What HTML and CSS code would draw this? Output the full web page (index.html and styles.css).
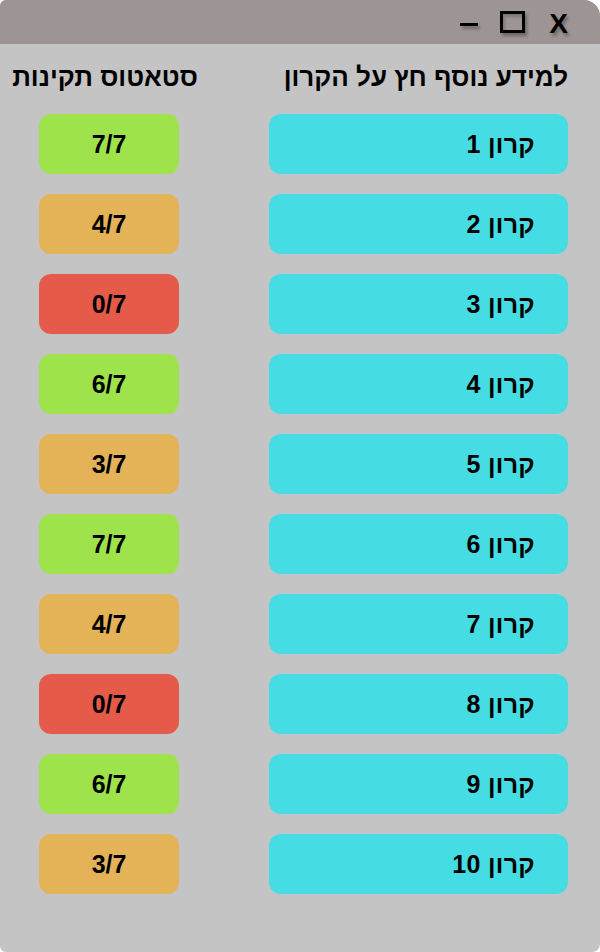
FILE: index.html
```html
<!DOCTYPE html>
<html lang="he">
<head>
<meta charset="utf-8">
<link rel="stylesheet" href="styles.css">
</head>
<body>
<div class="window">
  <div class="titlebar">
    <span class="tb-btn tb-min"></span>
    <span class="tb-btn tb-max"></span>
    <span class="tb-btn tb-close">X</span>
  </div>
  <div class="content" dir="rtl">
    <div class="head head-main">למידע נוסף חץ על הקרון</div>
    <div class="head head-status">סטאטוס תקינות</div>

    <div class="car">קרון 1</div><div class="status green">7/7</div>
    <div class="car">קרון 2</div><div class="status orange">4/7</div>
    <div class="car">קרון 3</div><div class="status red">0/7</div>
    <div class="car">קרון 4</div><div class="status green">6/7</div>
    <div class="car">קרון 5</div><div class="status orange">3/7</div>
    <div class="car">קרון 6</div><div class="status green">7/7</div>
    <div class="car">קרון 7</div><div class="status orange">4/7</div>
    <div class="car">קרון 8</div><div class="status red">0/7</div>
    <div class="car">קרון 9</div><div class="status green">6/7</div>
    <div class="car">קרון 10</div><div class="status orange">3/7</div>
  </div>
</div>
</body>
</html>
```
FILE: styles.css
```css
html, body {
  margin: 0;
  padding: 0;
  background: #ffffff;
}
body {
  font-family: "Liberation Sans", Arial, sans-serif;
}
.window {
  width: 600px;
  height: 952px;
  background: #c4c4c4;
  border-radius: 6px 16px 8px 6px;
  overflow: hidden;
  display: flex;
  flex-direction: column;
}
.titlebar {
  height: 44px;
  background: #9c9594;
  display: flex;
  align-items: center;
  justify-content: flex-end;
  padding-right: 32px;
  box-sizing: border-box;
}
.tb-btn {
  color: #000;
  font-weight: bold;
}
.tb-min {
  width: 18px;
  height: 3px;
  background: #000;
  box-shadow: 2px 3px 3px rgba(0,0,0,0.3);
  margin-right: 22px;
  position: relative;
  top: 2px;
}
.tb-max {
  width: 19px;
  height: 16px;
  border: 3px solid #000;
  box-shadow: 2px 3px 3px rgba(0,0,0,0.3), inset 2px 3px 3px rgba(0,0,0,0.2);
  margin-right: 24px;
}
.tb-close {
  font-size: 28px;
  line-height: 1;
  text-shadow: 2px 3px 3px rgba(0,0,0,0.3);
  position: relative;
  top: 2px;
}
.content {
  display: grid;
  grid-template-columns: 299px 140px;
  column-gap: 90px;
  row-gap: 20px;
  grid-auto-rows: 60px;
  grid-template-rows: 36px;
  padding: 14px 32px 0 0;
  font-weight: bold;
  font-size: 25px;
  color: #000;
}
.head {
  font-size: 26px;
  line-height: 32px;
  padding-top: 3px;
  white-space: nowrap;
  align-self: start;
}
.head-main {
  text-align: right;
}
.head-status {
  justify-self: center;
  position: relative;
  left: -4px;
}
.car {
  background: #45dce4;
  border-radius: 12px;
  display: flex;
  align-items: center;
  padding: 0 33px 0 0;
  box-sizing: border-box;
  letter-spacing: 0.3px;
}
.status {
  border-radius: 12px;
  display: flex;
  align-items: center;
  justify-content: center;
}
.green { background: #9ee34c; }
.orange { background: #e4b357; }
.red { background: #e55a48; }
```
